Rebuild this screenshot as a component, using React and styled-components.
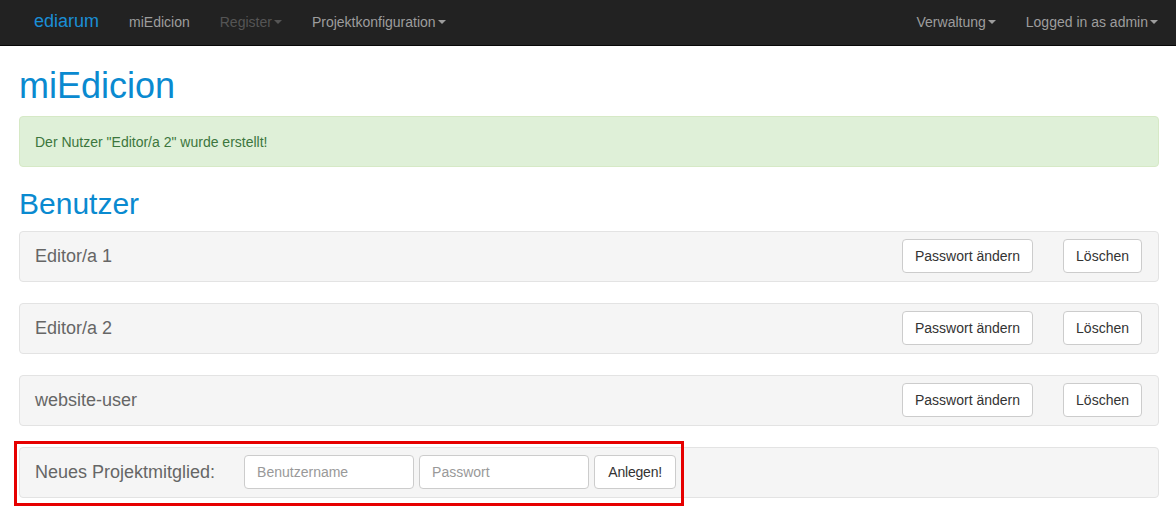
import React from 'react';
import styled, { createGlobalStyle } from 'styled-components';

const Global = createGlobalStyle`
  * { box-sizing: border-box; }
  body {
    margin: 0;
    font-family: "Liberation Sans", Arial, sans-serif;
    font-size: 14px;
    color: #333;
    background: #fff;
  }
`;

const Navbar = styled.nav`
  display: flex;
  align-items: center;
  justify-content: space-between;
  height: 46px;
  background-color: #222;
  border-bottom: 1px solid #080808;
  padding: 0 3px 2px 19px;
`;

const NavGroup = styled.div`
  display: flex;
  align-items: center;
  height: 100%;
`;

const Brand = styled.a`
  color: #1a8fd6;
  font-size: 18px;
  padding: 0 15px;
  text-decoration: none;
`;

const NavLink = styled.a`
  display: flex;
  align-items: center;
  color: ${({ disabled }) => (disabled ? '#555' : '#9d9d9d')};
  font-size: 14px;
  padding: 0 15px;
  text-decoration: none;
`;

const Caret = styled.span`
  display: inline-block;
  width: 0;
  height: 0;
  margin-left: 2px;
  border-top: 4px solid;
  border-left: 4px solid transparent;
  border-right: 4px solid transparent;
`;

const Container = styled.main`
  padding: 0 17px 30px 19px;
`;

const Title = styled.h1`
  margin: 20px 0 10px;
  font-size: 36px;
  font-weight: 500;
  line-height: 1.1;
  color: #0a8ad0;
`;

const Alert = styled.div`
  background-color: #dff0d8;
  border: 1px solid #d6e9c6;
  border-radius: 4px;
  color: #3c763d;
  padding: 16px 15px 15px;
  font-size: 14px;
  line-height: 18px;
`;

const Subtitle = styled.h2`
  margin: 20px 0 11px;
  font-size: 30px;
  font-weight: 500;
  line-height: 1.1;
  color: #0a8ad0;
`;

const List = styled.div`
  display: flex;
  flex-direction: column;
  gap: 21px;
`;

const Well = styled.div`
  position: relative;
  display: flex;
  align-items: center;
  height: 51px;
  background-color: #f5f5f5;
  border: 1px solid #e3e3e3;
  border-radius: 4px;
  padding: 0 16px 0 15px;
`;

const Name = styled.span`
  flex: 1;
  font-size: 18px;
  color: #666;
`;

const Actions = styled.div`
  display: flex;
  gap: 30px;
`;

const Button = styled.button`
  font-family: inherit;
  font-size: 14px;
  color: #333;
  background: #fff;
  border: 1px solid #ccc;
  border-radius: 4px;
  height: 34px;
  padding: 0 12px;
  cursor: pointer;
`;

const FormLabel = styled.span`
  font-size: 18px;
  color: #666;
  margin-right: 29px;
`;

const Input = styled.input`
  font-family: inherit;
  font-size: 14px;
  width: 170px;
  height: 34px;
  padding: 0 12px;
  border: 1px solid #ccc;
  border-radius: 4px;
  margin-right: 5px;
  color: #555;
  &::placeholder { color: #999; }
`;

const SmallButton = styled(Button)`
  width: 82px;
  padding: 0;
  font-size: 14px;
  letter-spacing: -0.2px;
`;

const Highlight = styled.div`
  position: absolute;
  left: -6px;
  top: -7px;
  width: 670px;
  height: 65px;
  border: 3px solid #e60000;
  pointer-events: none;
`;

const users = ['Editor/a 1', 'Editor/a 2', 'website-user'];

export default function App() {
  return (
    <>
      <Global />
      <Navbar>
        <NavGroup>
          <Brand>ediarum</Brand>
          <NavLink>miEdicion</NavLink>
          <NavLink disabled>Register<Caret /></NavLink>
          <NavLink>Projektkonfiguration<Caret /></NavLink>
        </NavGroup>
        <NavGroup>
          <NavLink>Verwaltung<Caret /></NavLink>
          <NavLink>Logged in as admin<Caret /></NavLink>
        </NavGroup>
      </Navbar>
      <Container>
        <Title>miEdicion</Title>
        <Alert>Der Nutzer "Editor/a 2" wurde erstellt!</Alert>
        <Subtitle>Benutzer</Subtitle>
        <List>
          {users.map((u) => (
            <Well key={u}>
              <Name>{u}</Name>
              <Actions>
                <Button>Passwort ändern</Button>
                <Button>Löschen</Button>
              </Actions>
            </Well>
          ))}
          <Well>
            <FormLabel>Neues Projektmitglied:</FormLabel>
            <Input placeholder="Benutzername" />
            <Input type="password" placeholder="Passwort" />
            <SmallButton>Anlegen!</SmallButton>
            <Highlight />
          </Well>
        </List>
      </Container>
    </>
  );
}
